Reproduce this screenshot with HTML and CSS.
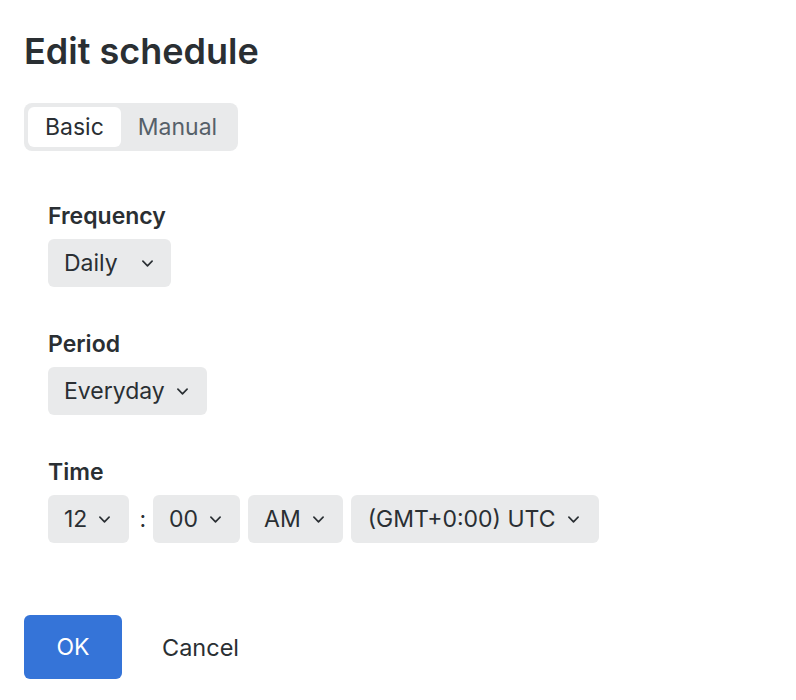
FILE: index.html
```html
<!DOCTYPE html>
<html>
<head>
<meta charset="utf-8">
<link rel="stylesheet" href="styles.css">
</head>
<body>
<div class="dialog">
  <h1 class="title">Edit schedule</h1>
  <div class="tabs">
    <button class="tab active">Basic</button>
    <button class="tab">Manual</button>
  </div>
  <div class="form">
    <div class="field">
      <div class="label">Frequency</div>
      <div class="row">
        <div class="select w-daily"><span>Daily</span><svg class="chev" viewBox="0 0 12 7"><path d="M1 1l5 5 5-5"/></svg></div>
      </div>
    </div>
    <div class="field">
      <div class="label">Period</div>
      <div class="row">
        <div class="select"><span>Everyday</span><svg class="chev" viewBox="0 0 12 7"><path d="M1 1l5 5 5-5"/></svg></div>
      </div>
    </div>
    <div class="field">
      <div class="label">Time</div>
      <div class="row">
        <div class="select"><span>12</span><svg class="chev" viewBox="0 0 12 7"><path d="M1 1l5 5 5-5"/></svg></div>
        <span class="colon">:</span>
        <div class="select"><span>00</span><svg class="chev" viewBox="0 0 12 7"><path d="M1 1l5 5 5-5"/></svg></div>
        <div class="select"><span>AM</span><svg class="chev" viewBox="0 0 12 7"><path d="M1 1l5 5 5-5"/></svg></div>
        <div class="select wide"><span>(GMT+0:00) UTC</span><svg class="chev" viewBox="0 0 12 7"><path d="M1 1l5 5 5-5"/></svg></div>
      </div>
    </div>
  </div>
  <div class="actions">
    <button class="btn primary">OK</button>
    <button class="btn link">Cancel</button>
  </div>
</div>
</body>
</html>
```
FILE: styles.css
```css
* { box-sizing: border-box; }
html, body { margin: 0; padding: 0; background: #fff; }
body {
  font-family: Inter, "Noto Sans", sans-serif;
  color: #2a2f33;
  font-size: 23px;
}
.dialog {
  padding: 28px 24px 24px 24px;
}
.title {
  margin: 0;
  font-size: 36px;
  font-weight: 600;
  line-height: 46px;
}
.tabs {
  margin-top: 29px;
  display: inline-flex;
  padding: 4px;
  background: #e9eaeb;
  border-radius: 8px;
}
.tab {
  font-family: inherit;
  font-size: 23px;
  height: 40px;
  border: 0;
  background: transparent;
  color: #566069;
  padding: 0 17px;
  border-radius: 6px;
  line-height: 40px;
}
.tab.active {
  background: #fff;
  color: #2a2f33;
}
.form {
  padding: 0 24px;
  margin-top: 51px;
}
.field { margin-bottom: 43px; }
.field:last-child { margin-bottom: 0; }
.label {
  font-weight: 600;
  line-height: 28px;
  margin-bottom: 9px;
}
.row {
  display: flex;
  align-items: center;
  gap: 8px;
}
.select {
  display: inline-flex;
  align-items: center;
  height: 48px;
  padding: 0 19px 0 16px;
  background: #e9eaeb;
  border-radius: 6px;
  gap: 12px;
  line-height: 48px;
}
.select.wide { padding-left: 17px; padding-right: 20px; }
.w-daily { min-width: 123px; justify-content: space-between; padding-right: 18px; }
.chev {
  width: 11px;
  height: 7px;
  fill: none;
  stroke: #2a2f33;
  stroke-width: 1.8;
  stroke-linecap: round;
  stroke-linejoin: round;
}
.colon { padding: 0 1px 0 2px; margin-right: -2px; }
.actions {
  margin-top: 72px;
  display: flex;
  align-items: center;
  gap: 16px;
}
.btn {
  font-family: inherit;
  font-size: 23px;
  border: 0;
  height: 64px;
  padding: 0 24px;
  border-radius: 6px;
  cursor: pointer;
}
.btn.primary {
  background: #3574d8;
  color: #fff;
  min-width: 98px;
}
.btn.link {
  background: transparent;
  color: #2a2f33;
  font-size: 23.5px;
}
```
